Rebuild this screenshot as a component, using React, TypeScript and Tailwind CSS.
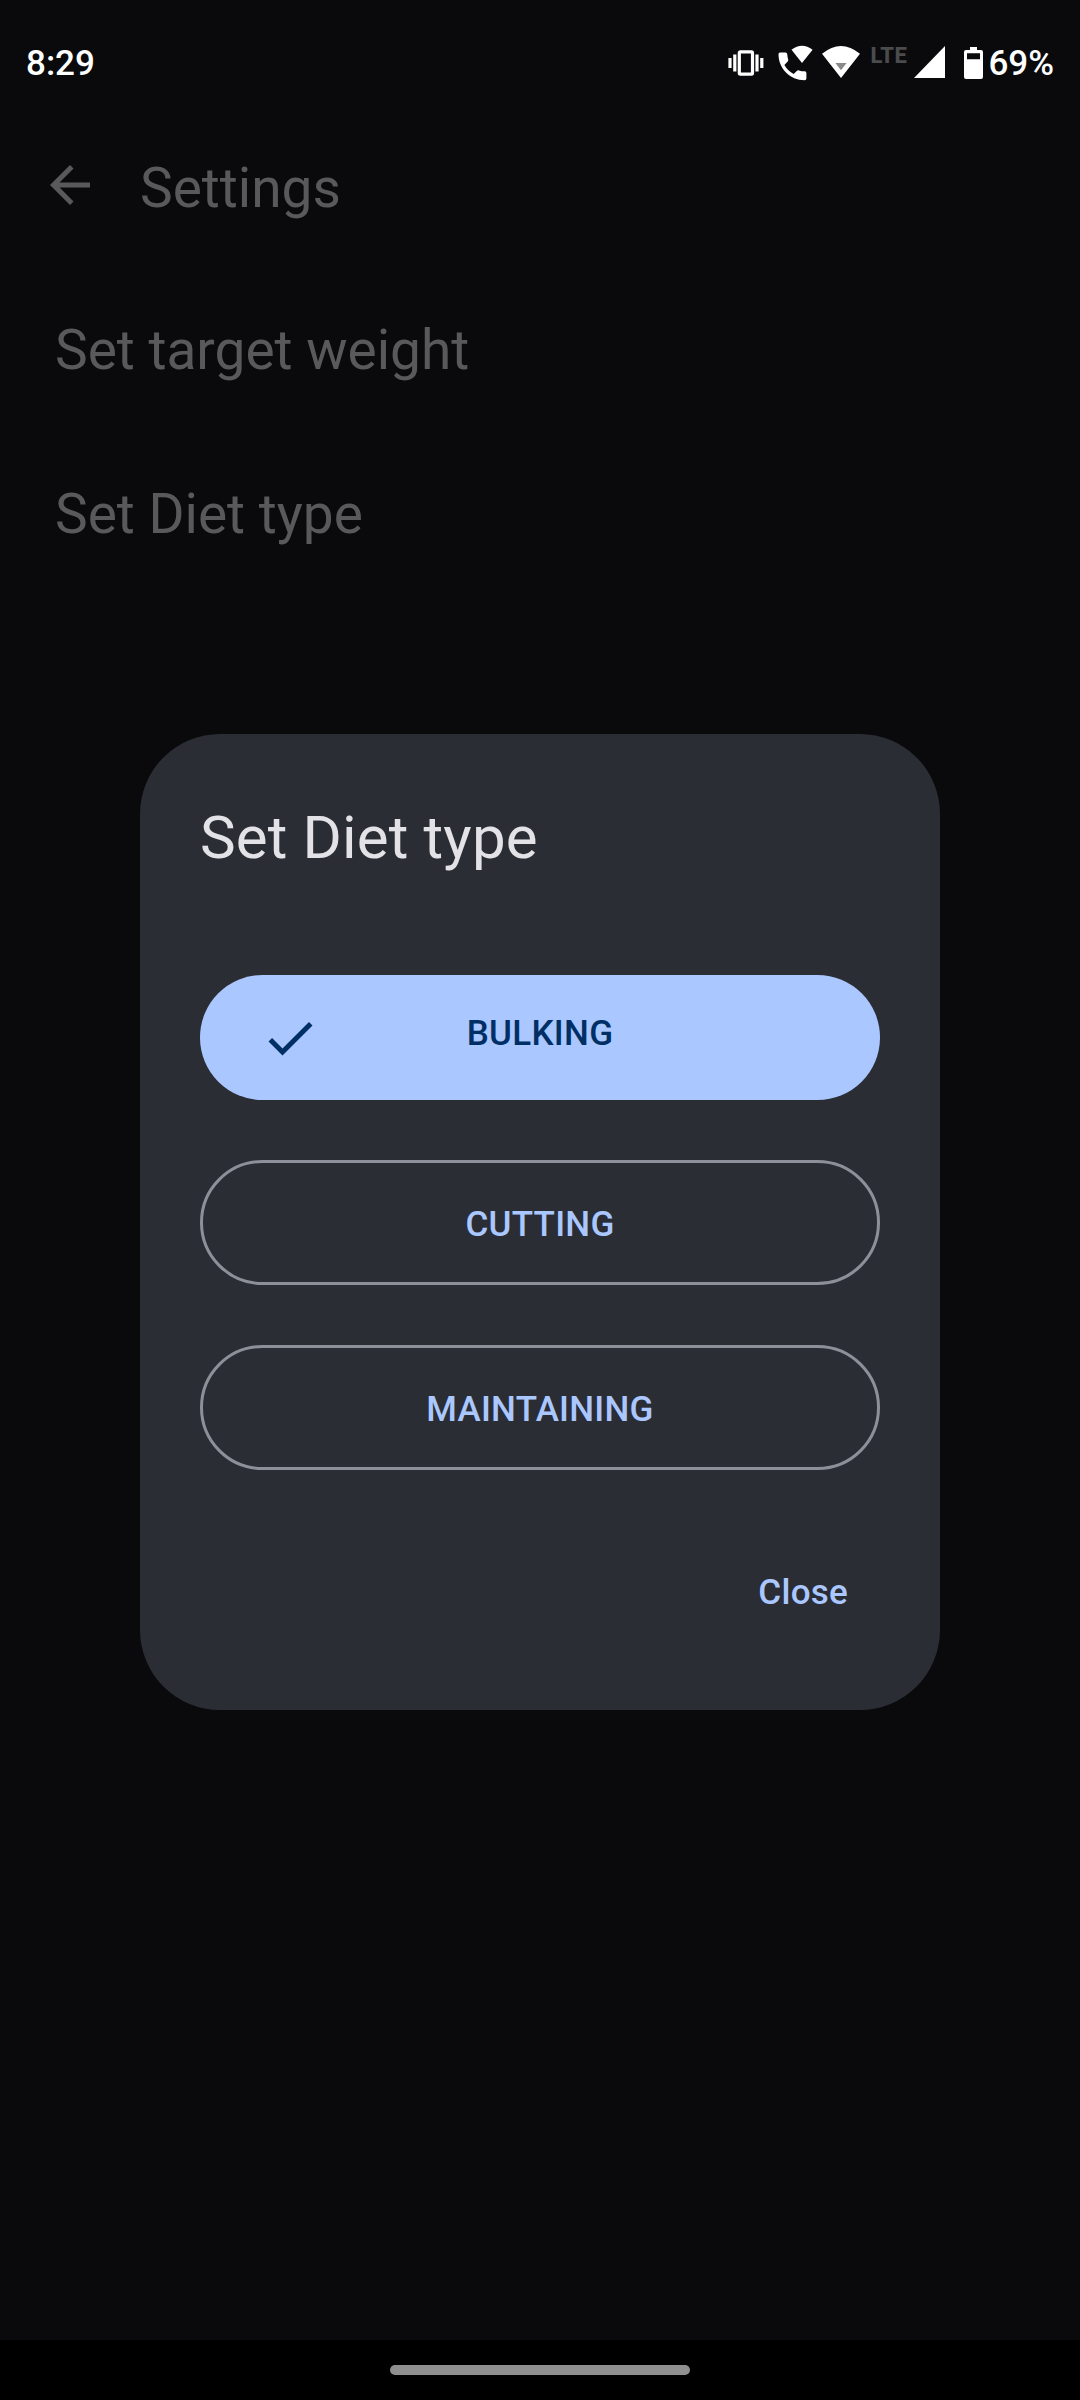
function StatusBar() {
  return (
    <header className="flex h-[125px] items-start justify-between pt-[38px] pr-[26px] pl-[26px] text-[35px] leading-[50px] font-medium text-white">
      <span className="mt-px">8:29</span>
      <div className="flex h-[50px] items-start">
        <svg className="mt-[12px] mr-[14px] h-[26px] w-[36px]" viewBox="0 0 36 26" fill="#fff">
          <rect x="0.4" y="8" width="3.2" height="10" />
          <rect x="5.2" y="4.5" width="3.2" height="17" />
          <rect x="27.4" y="4.5" width="3.2" height="17" />
          <rect x="32.2" y="8" width="3.2" height="10" />
          <rect x="11.3" y="1.9" width="13.2" height="22.2" rx="1" fill="none" stroke="#fff" strokeWidth="3.2" />
        </svg>
        <svg className="mt-[7px] mr-[9px] h-[36px] w-[35px]" viewBox="0 0 35 36" fill="#fff">
          <path d="M13.5 4.8Q24 -3.5 34.6 4.8L24 18Z" />
          <path d="M0.5 9.2Q0.5 7.5 2 7.5H7.5Q9 7.5 9.2 9Q9.4 12 10.2 14.6Q10.5 15.8 9.7 16.6L6.4 20Q9.8 26 15.6 29L18.8 25.9Q19.7 25 21 25.4Q23.8 26.2 26.8 26.3Q28.4 26.4 28.4 28V33.4Q28.4 35.2 26.6 35.2C12 35.2 0.5 23.5 0.5 9.2Z" />
        </svg>
        <svg className="mt-[8px] mr-[10px] h-[32px] w-[38px]" viewBox="0 0 38 32">
          <path d="M0 7.8Q19 -7.8 38 7.8L19 32Z" fill="#fff" />
          <path d="M13.4 17H24.6L19 24.3Z" fill="#8a8a8b" />
        </svg>
        <span className="mt-[5px] mr-[6px] block w-[38px] text-[22px] leading-[25px] font-extrabold tracking-[0.3px] text-[#4b4b4d]">LTE</span>
        <svg className="mt-[8px] mr-[19px] h-[32px] w-[31px]" viewBox="0 0 31 32" fill="#fff">
          <path d="M31 0V32H0Z" />
        </svg>
        <svg className="mt-[9px] mr-[5px] h-[32px] w-[19px]" viewBox="0 0 19 32" fill="#fff" fillRule="evenodd">
          <path d="M6 0H13V3H17Q19 3 19 5V30Q19 32 17 32H2Q0 32 0 30V5Q0 3 2 3H6ZM3 6.3V12.3H16V6.3Z" />
        </svg>
        <span className="mt-px">69%</span>
      </div>
    </header>
  );
}

function Choice({ label, selected = false }: { label: string; selected?: boolean }) {
  if (selected) {
    return (
      <button className="grid h-[125px] w-full grid-cols-[60px_1fr_60px] items-center rounded-full bg-[#aac7ff] px-[60px] text-[35px] leading-[50px] font-medium tracking-[0.3px] text-[#002f65]">
        <svg className="size-[60px]" viewBox="0 0 24 24" fill="currentColor">
          <path d="M9 16.17 4.83 12l-1.42 1.41L9 19 21 7l-1.41-1.41z" />
        </svg>
        <span className="-mt-[7px] text-center">{label}</span>
      </button>
    );
  }
  return (
    <button className="flex h-[125px] w-full items-center justify-center rounded-full border-[3px] border-[#8e9099] pt-[4px] text-[35px] leading-[50px] font-medium tracking-[0.25px] text-[#aac7ff]">
      {label}
    </button>
  );
}

export default function App() {
  return (
    <div className="relative flex h-[2400px] w-[1080px] flex-col overflow-hidden bg-[#0a0a0c] font-[Roboto,sans-serif]">
      <StatusBar />
      <main className="flex-1 text-[55px] leading-[70px] text-[#59595b]">
        <div className="flex items-center pt-[28px] pl-[40px]">
          <svg className="-mt-[6px] mr-[40px] size-[60px]" viewBox="0 0 24 24" fill="currentColor">
            <path d="M20 11H7.83l5.59-5.59L12 4l-8 8 8 8 1.41-1.41L7.83 13H20v-2z" />
          </svg>
          <h1>Settings</h1>
        </div>
        <p className="mt-[92px] pl-[55px]">Set target weight</p>
        <p className="mt-[94px] pl-[55px]">Set Diet type</p>
      </main>
      <nav className="flex h-[60px] items-center justify-center bg-black">
        <div className="h-[10px] w-[300px] rounded-full bg-[#8f8f8f]" />
      </nav>

      <div className="absolute inset-x-0 top-[104px] bottom-[60px] flex items-center justify-center">
        <section role="dialog" className="flex h-[976px] w-[800px] flex-col rounded-[80px] bg-[#2b2d35] px-[60px] pt-[69px]">
          <h2 className="text-[60px] leading-[70px] tracking-[0.15px] text-[#e3e2e6]">Set Diet type</h2>
          <div className="mt-[102px] flex flex-col gap-[60px]">
            <Choice label="BULKING" selected />
            <Choice label="CUTTING" />
            <Choice label="MAINTAINING" />
          </div>
          <button className="mt-[98px] mr-[32px] self-end text-[35px] leading-[50px] font-medium tracking-[0.25px] text-[#aac7ff]">Close</button>
        </section>
      </div>
    </div>
  );
}
